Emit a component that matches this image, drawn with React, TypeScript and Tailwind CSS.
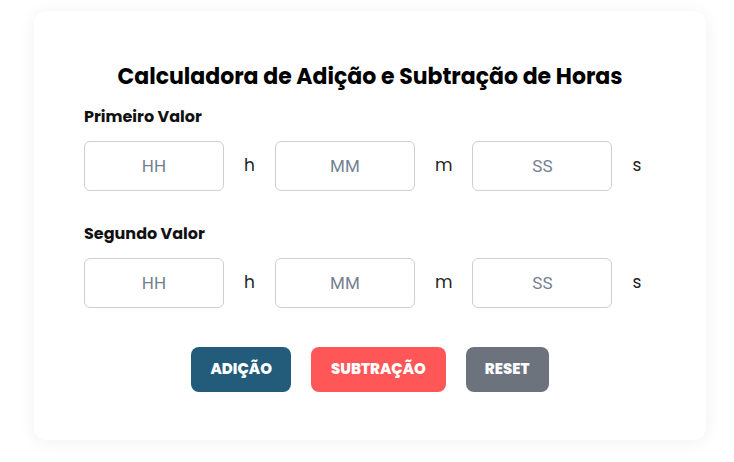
import React, { FC, useState } from "react";

const font = { fontFamily: "Poppins, Lato, 'Noto Sans', sans-serif" };

const TimeRow: FC<{ values: string[]; onChange: (i: number, v: string) => void }> = ({ values, onChange }) => {
  const units = ["h", "m", "s"];
  const holders = ["HH", "MM", "SS"];
  return (
    <div className="flex items-center gap-5">
      {units.map((u, i) => (
        <React.Fragment key={u}>
          <input
            value={values[i]}
            onChange={(e) => onChange(i, e.target.value)}
            placeholder={holders[i]}
            className="w-[140px] h-[50px] rounded-md border border-[#cfcfcf] text-center text-[17px] font-[family-name:Roboto] text-[#333] placeholder:text-[#75808f] outline-none"
          />
          <span className="text-[17px] text-[#222]">{u}</span>
        </React.Fragment>
      ))}
    </div>
  );
};

const App: FC = () => {
  const [first, setFirst] = useState(["", "", ""]);
  const [second, setSecond] = useState(["", "", ""]);

  const set = (arr: string[], fn: (a: string[]) => void) => (i: number, v: string) => {
    const next = [...arr];
    next[i] = v;
    fn(next);
  };

  return (
    <div className="w-[734px] h-[462px] bg-white pt-[11px] pl-[34px]" style={font}>
      <div className="w-[672px] h-[429px] bg-white rounded-xl shadow-[0_2px_18px_rgba(0,0,0,0.06)] pt-[51px] px-[50px]">
        <h1 className="text-center text-[22px] leading-[30px] font-bold text-black">
          Calculadora de Adição e Subtração de Horas
        </h1>

        <div className="mt-[13px] text-[16px] leading-[24px] font-bold text-[#111]">Primeiro Valor</div>
        <div className="mt-[12px]">
          <TimeRow values={first} onChange={set(first, setFirst)} />
        </div>

        <div className="mt-[31px] text-[16px] leading-[24px] font-bold text-[#111]">Segundo Valor</div>
        <div className="mt-[12px]">
          <TimeRow values={second} onChange={set(second, setSecond)} />
        </div>

        <div className="mt-[39px] flex justify-center gap-5">
          <button className="h-[45px] px-[19px] rounded-lg bg-[#225c7a] text-white text-[15px] font-extrabold uppercase">
            Adição
          </button>
          <button className="h-[45px] px-[20px] rounded-lg bg-[#ff5757] text-white text-[15px] font-extrabold uppercase">
            Subtração
          </button>
          <button
            onClick={() => {
              setFirst(["", "", ""]);
              setSecond(["", "", ""]);
            }}
            className="h-[45px] px-[19px] rounded-lg bg-[#6c737d] text-white text-[15px] font-extrabold uppercase"
          >
            Reset
          </button>
        </div>
      </div>
    </div>
  );
};

export default App;
